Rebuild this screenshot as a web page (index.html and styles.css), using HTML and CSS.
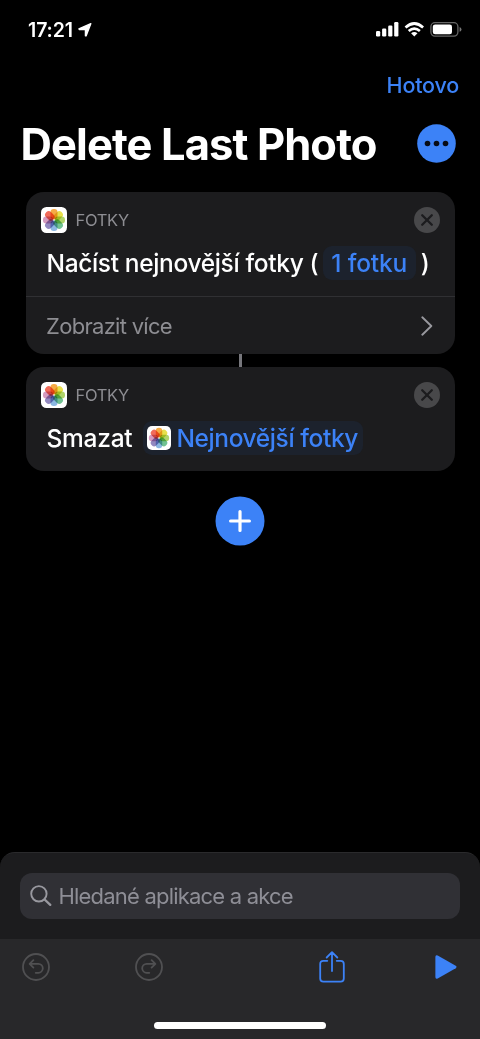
FILE: index.html
```html
<!DOCTYPE html>
<html lang="cs">
<head>
<meta charset="utf-8">
<title>Delete Last Photo</title>
<link rel="stylesheet" href="styles.css">
</head>
<body>
<svg class="defs" width="0" height="0">
  <symbol id="photos" viewBox="0 0 26 26">
    <rect width="26" height="26" rx="5.5" fill="#fff"/>
    <g class="petals">
      <rect x="9.5" y="2" width="7" height="10.2" rx="3.2" fill="#f5a02c"/>
      <rect x="9.5" y="2" width="7" height="10.2" rx="3.2" fill="#e5dc33" transform="rotate(45 13 13)"/>
      <rect x="9.5" y="2" width="7" height="10.2" rx="3.2" fill="#a5ce55" transform="rotate(90 13 13)"/>
      <rect x="9.5" y="2" width="7" height="10.2" rx="3.2" fill="#5dba83" transform="rotate(135 13 13)"/>
      <rect x="9.5" y="2" width="7" height="10.2" rx="3.2" fill="#7badde" transform="rotate(180 13 13)"/>
      <rect x="9.5" y="2" width="7" height="10.2" rx="3.2" fill="#8479b8" transform="rotate(225 13 13)"/>
      <rect x="9.5" y="2" width="7" height="10.2" rx="3.2" fill="#cf8db6" transform="rotate(270 13 13)"/>
      <rect x="9.5" y="2" width="7" height="10.2" rx="3.2" fill="#ef5844" transform="rotate(315 13 13)"/>
    </g>
  </symbol>
  <symbol id="close" viewBox="0 0 26 26">
    <circle cx="13" cy="13" r="13" fill="#48484a"/>
    <path d="M8.2 8.2l9.6 9.6M17.8 8.2l-9.6 9.6" stroke="#1c1c1e" stroke-width="2.3" stroke-linecap="round"/>
  </symbol>
</svg>
<div class="screen">
  <div class="status">
    <span class="time">17:21</span>
    <svg class="location" width="14" height="14" viewBox="0 0 14 14"><path d="M12.8.7L.9 5.8L1.2 6.5H7.4V12.8L8.1 12.9z" fill="#fff" stroke="#fff" stroke-width="1.3" stroke-linejoin="round"/></svg>
    <svg class="signals" width="86" height="16" viewBox="0 0 86 16">
      <g fill="#fff">
        <rect x="0" y="9" width="4.2" height="5.5" rx="1.2"/>
        <rect x="6.1" y="6.5" width="4.2" height="8" rx="1.2"/>
        <rect x="12.2" y="3.5" width="4.2" height="11" rx="1.2"/>
        <rect x="18.2" y="0" width="4.2" height="14.5" rx="1.2"/>
        <path d="M38.3 14.5l-3.2-3.2q3.2-2.6 6.4 0z"/>
      </g>
      <g fill="none" stroke="#fff" stroke-width="2.7">
        <path d="M29.5 5.4q8.8-7.8 17.6 0M32.7 9q5.6-4.8 11.2 0"/>
      </g>
      <rect x="54.9" y=".7" width="27" height="13.4" rx="4" fill="none" stroke="#666" stroke-width="1.3"/>
      <rect x="56.8" y="2.5" width="19.2" height="9.8" rx="2.3" fill="#fff"/>
      <path d="M83.6 5q1.9.8 1.9 2.4t-1.9 2.4z" fill="#777"/>
    </svg>
  </div>
  <div class="nav"><span class="done">Hotovo</span></div>
  <div class="heading">
    <h1 class="title">Delete Last Photo</h1>
    <svg class="more" width="39" height="39" viewBox="0 0 39 39"><circle cx="19.5" cy="19.5" r="19.3" fill="#3c82f7"/><g fill="#080c16"><circle cx="10.5" cy="19.5" r="2.8"/><circle cx="19.5" cy="19.5" r="2.8"/><circle cx="28.5" cy="19.5" r="2.8"/></g></svg>
  </div>
  <div class="flow">
    <section class="card card-first">
      <div class="card-head">
        <svg width="26" height="26"><use href="#photos"/></svg>
        <span class="app">FOTKY</span>
        <svg class="close" width="26" height="26"><use href="#close"/></svg>
      </div>
      <div class="action"><span class="load">Načíst nejnovější fotky (</span><span class="pill count">1 fotku</span><span>)</span></div>
      <div class="expand">
        <span class="show-more">Zobrazit více</span>
        <svg width="12" height="20" viewBox="0 0 12 20"><path d="M1.3 1.3l9 8.7-9 8.7" fill="none" stroke="#98989e" stroke-width="1.9" stroke-linecap="round" stroke-linejoin="round"/></svg>
      </div>
    </section>
    <div class="connector"></div>
    <section class="card card-second">
      <div class="card-head">
        <svg width="26" height="26"><use href="#photos"/></svg>
        <span class="app">FOTKY</span>
        <svg class="close" width="26" height="26"><use href="#close"/></svg>
      </div>
      <div class="action"><span class="delete">Smazat</span><span class="pill variable"><svg width="24" height="24"><use href="#photos"/></svg><span class="latest">Nejnovější fotky</span></span></div>
    </section>
    <svg class="add" width="50" height="50" viewBox="0 0 50 50"><circle cx="25" cy="25" r="24.5" fill="#3c82f7"/><path d="M25 15.6v18.8M15.6 25h18.8" stroke="#fff" stroke-width="3.2" stroke-linecap="round"/></svg>
  </div>
  <div class="drawer">
    <div class="search">
      <svg width="22" height="22" viewBox="0 0 22 22" fill="none" stroke="#98989f" stroke-width="1.9" stroke-linecap="round"><circle cx="8.9" cy="8.8" r="7.7"/><path d="M14.6 14.5l5.7 5.4" stroke-width="2.3"/></svg>
      <span class="placeholder">Hledané aplikace a akce</span>
    </div>
  </div>
  <div class="toolbar">
    <div class="tools">
      <svg class="undo" width="28" height="28" viewBox="0 0 28 28" fill="none" stroke="#505052" stroke-width="1.8" stroke-linecap="round" stroke-linejoin="round"><circle cx="14" cy="14" r="13"/><path d="M11.4 7.1L7.6 10.8l3.8 3.8M7.8 10.8h8.5a4.4 4.4 0 0 1 0 9h-2.6"/></svg>
      <svg class="redo" width="28" height="28" viewBox="0 0 28 28" fill="none" stroke="#505052" stroke-width="1.8" stroke-linecap="round" stroke-linejoin="round"><circle cx="14" cy="14" r="13"/><path d="M16.6 7.1l3.8 3.7-3.8 3.8M20.2 10.8h-8.5a4.4 4.4 0 0 0 0 9h2.6"/></svg>
      <svg class="share" width="26" height="32" viewBox="0 0 26 32" fill="none" stroke="#3c82f7" stroke-width="1.8" stroke-linecap="round" stroke-linejoin="round"><path d="M8.3 9.8H4.4Q1.2 9.8 1.2 13v14.4q0 3.2 3.2 3.2h17.2q3.2 0 3.2-3.2V13q0-3.2-3.2-3.2h-3.9M13 20V1.4M7.7 6.5L13 1.2l5.3 5.3"/></svg>
      <svg class="play" width="22" height="24" viewBox="0 0 22 24"><path d="M.4 2Q.4-.6 2.7.6l18 10.2q1.7 1.2 0 2.4l-18 10.2Q.4 24.6.4 22z" fill="#3c82f7"/></svg>
    </div>
    <div class="home"></div>
  </div>
</div>
</body>
</html>
```
FILE: styles.css
```css
* { box-sizing: border-box; }
body { margin: 0; background: #000; font-family: Inter, "Noto Sans", sans-serif; color: #fff; }
svg { display: block; flex: none; }
span, h1 { white-space: nowrap; }
.defs { position: absolute; }
.petals rect { mix-blend-mode: multiply; opacity: .88; }
.screen { width: 480px; height: 1039px; display: flex; flex-direction: column; overflow: hidden; background: #000; }
.status { height: 60px; display: flex; align-items: center; padding: 0 18px 0 28px; }
.time { font-size: 19.5px; font-weight: 600; letter-spacing: -.1px; }
.location { margin-left: 5.5px; }
.signals { margin-left: auto; }
.nav { height: 50px; display: flex; align-items: center; justify-content: flex-end; padding-right: 21px; }
.done { font-size: 21.5px; font-weight: 500; color: #3c82f7; letter-spacing: -.2px; }
.heading { height: 82px; display: flex; justify-content: space-between; align-items: flex-start; padding: 7px 24px 0 20.5px; }
.title { margin: 0; font-size: 43.5px; line-height: 54px; font-weight: 700; letter-spacing: -.9px; }
.more { margin-top: 7px; }
.flow { flex: 1; padding: 0 25.5px; display: flex; flex-direction: column; align-items: center; }
.card { width: 429px; background: #1c1c1e; border-radius: 18px; overflow: hidden; }
.card-first { height: 161.5px; }
.card-second { height: 104.5px; }
.card-head { height: 53px; padding: 15px 15px 0 15px; display: flex; align-items: flex-start; }
.card-second .card-head { padding-top: 15px; }
.app { margin-left: 9px; font-size: 16.5px; line-height: 27px; color: #8d8d92; letter-spacing: -.3px; }
.close { margin-left: auto; }
.action { display: flex; align-items: center; height: 51px; padding: 0 0 15px 21px; font-size: 24.5px; line-height: 32px; font-weight: 500; }
.card-second .action { padding-bottom: 14px; }
.load { letter-spacing: -.35px; }
.pill { background: #1c222d; color: #3c82f7; border-radius: 9px; height: 34px; display: flex; align-items: center; }
.count { width: 93px; justify-content: center; margin: 0 5px 0 4.5px; letter-spacing: -.15px; }
.delete { letter-spacing: -.25px; }
.variable { margin-left: 11px; padding: 0 5px 0 4px; gap: 5px; }
.latest { letter-spacing: -.4px; }
.expand { height: 57.5px; border-top: 1.5px solid #303033; padding: 1px 22px 0 20.5px; display: flex; align-items: center; justify-content: space-between; }
.show-more { font-size: 22px; color: #8d8d92; letter-spacing: -.7px; }
.connector { width: 3px; height: 13px; background: #77777c; }
.add { margin-top: 24.5px; }
.drawer { height: 87px; border-radius: 15px 15px 0 0; background: #1c1c1e; border-top: 1px solid #2a2a2c; padding: 20px; }
.search { height: 46px; border-radius: 12px; background: #303035; padding: 0 10px; display: flex; align-items: center; }
.placeholder { margin-left: 6.5px; font-size: 22px; color: #8e8e96; letter-spacing: -.8px; }
.toolbar { height: 100px; background: #28282a; display: flex; flex-direction: column; align-items: center; justify-content: space-between; padding-bottom: 10px; }
.tools { width: 480px; display: flex; align-items: center; padding: 12px 0 0 22px; }
.redo { margin-left: 85px; }
.share { margin-left: 156px; }
.play { margin-left: 90px; }
.home { width: 172px; height: 7px; border-radius: 4px; background: #fff; }
```
